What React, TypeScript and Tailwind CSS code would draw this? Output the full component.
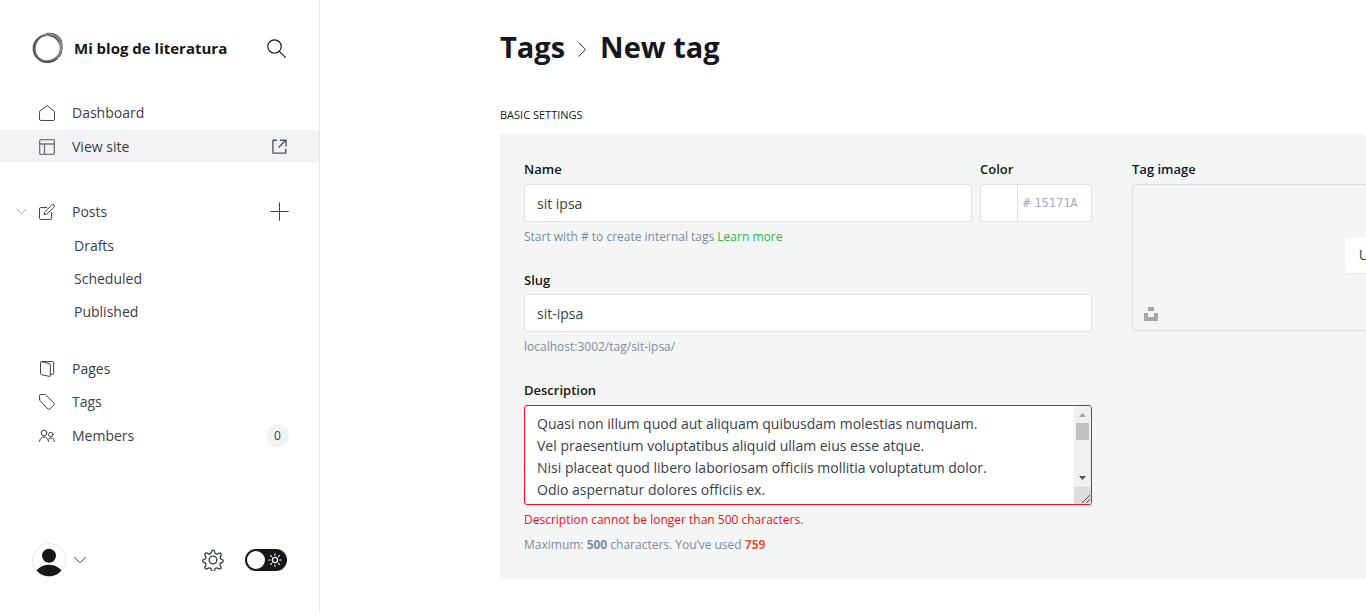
import type { ReactNode } from "react";

type IconProps = { className?: string; children: ReactNode };

function Icon({ className = "", children }: IconProps) {
  return (
    <svg
      viewBox="0 0 24 24"
      fill="none"
      stroke="currentColor"
      strokeWidth="1.5"
      strokeLinecap="round"
      strokeLinejoin="round"
      aria-hidden="true"
      className={"shrink-0 " + className}
    >
      {children}
    </svg>
  );
}

const HomeIcon = () => (
  <Icon className="size-4">
    <path d="M.8 9.5 12 .8l11.2 8.7v12a1.7 1.7 0 0 1-1.7 1.7h-19a1.7 1.7 0 0 1-1.7-1.7z" />
  </Icon>
);
const LayoutIcon = () => (
  <Icon className="size-4 text-[#6f767d]">
    <rect x="1" y="1" width="22" height="22" rx="1.5" strokeWidth="2" />
    <path strokeWidth="2" d="M1 7.500h22M8.200 7.500V23" />
  </Icon>
);
const ExternalIcon = () => (
  <Icon className="size-[15px] text-[#4d555c]">
    <path strokeWidth="2.200" strokeLinecap="butt" d="M8 2H1.500v20.500H22V15.500M12.500 2H22.500v10M22 2 10.500 13.500" />
  </Icon>
);
const PenIcon = () => (
  <Icon className="size-4">
    <path d="M19 12.500v9a1.700 1.700 0 0 1-1.700 1.700H2.500A1.700 1.700 0 0 1 .8 21.500V7A1.700 1.700 0 0 1 2.500 5.300h9" />
    <path d="m9 11.500 10.200-10a2.300 2.300 0 0 1 3.300 3.300l-10.200 10-4.300 1z" />
  </Icon>
);
const PagesIcon = () => (
  <Icon className="size-4">
    <path d="M6 .9h14.500a1.500 1.500 0 0 1 1.500 1.500V18.500a1.500 1.500 0 0 1-1.500 1.500H17M3.500.9 15.500 4a2 2 0 0 1 1.500 2v16a1.200 1.200 0 0 1-1.500 1.100L4 20.600A2 2 0 0 1 2.300 18.600V2.100A1.200 1.200 0 0 1 3.500.9h3" />
  </Icon>
);
const TagIcon = () => (
  <Icon className="size-4">
    <path d="M.8 8V2.300A1.500 1.500 0 0 1 2.300.8H8.500a3 3 0 0 1 2.100.9l12 12a1.700 1.700 0 0 1 0 2.400l-6.500 6.500a1.700 1.700 0 0 1-2.400 0L1.700 10.100A3 3 0 0 1 .8 8z" />
  </Icon>
);
const MembersIcon = () => (
  <Icon className="size-4">
    <circle cx="7.500" cy="7.500" r="4.200" />
    <path d="M.8 20.200a6.700 6.700 0 0 1 13.400 0" />
    <circle cx="17.800" cy="9.800" r="3.300" />
    <path d="M14.500 16.300a5.300 5.300 0 0 1 8.700 4" />
  </Icon>
);
const SearchIcon = () => (
  <Icon className="size-[19px]">
    <circle cx="9.500" cy="9.500" r="8.500" />
    <path d="m15.600 15.600 7.600 7.600" />
  </Icon>
);
const GearIcon = () => (
  <Icon className="size-[22px]">
    <circle cx="12" cy="12" r="4.200" />
    <path d="m13.700 2.600.5 1.600a2 2 0 0 0 2.700 1.200l1.700-.8a1.700 1.700 0 0 1 2.200 2.300l-.8 1.600a2 2 0 0 0 1.100 2.700l.9.300a1.700 1.700 0 0 1 0 3.200l-1 .300a2 2 0 0 0-1.100 2.700l.8 1.700a1.700 1.700 0 0 1-2.200 2.200l-1.700-.8a2 2 0 0 0-2.700 1.200l-.5 1.300a1.700 1.700 0 0 1-3.200 0l-.5-1.300a2 2 0 0 0-2.700-1.200l-1.700.8a1.700 1.700 0 0 1-2.200-2.200l.8-1.700A2 2 0 0 0 3 15l-1.100-.4a1.700 1.700 0 0 1 0-3.200L3 11.100a2 2 0 0 0 1.100-2.700l-.8-1.600a1.700 1.700 0 0 1 2.200-2.300l1.700.8A2 2 0 0 0 9.900 4.200l.5-1.600a1.700 1.700 0 0 1 3.300 0z" />
  </Icon>
);
const SunIcon = () => (
  <Icon className="size-[14px]">
    <circle cx="12" cy="12" r="4.500" strokeWidth="2" />
    <path strokeWidth="2" d="M12 1.500v2M12 20.500v2M1.500 12h2M20.500 12h2M4.600 4.600 6 6M18 18l1.400 1.400M4.600 19.400 6 18M18 6l1.400-1.400" />
  </Icon>
);
const BlogLogo = () => (
  <svg viewBox="0 0 32 32" fill="none" className="size-8 shrink-0" aria-hidden="true">
    <ellipse cx="15.300" cy="16.500" rx="13.600" ry="13.500" stroke="#555" strokeWidth="2" />
    <ellipse cx="15.800" cy="16.800" rx="14.300" ry="13.600" stroke="#444" strokeWidth="1" />
    <ellipse cx="16.600" cy="15.300" rx="14.300" ry="12.600" stroke="#777" strokeWidth="1.300" transform="rotate(-45 16.600 15.300)" />
    <path d="M13 3C20 .5 28 4.500 29 12c.8 6-.5 10-4.500 14" stroke="#8a8a8a" strokeWidth="2.500" />
    <path d="M14 1.800C21-.2 28.500 3.500 29.800 10.500" stroke="#666" strokeWidth="1" />
  </svg>
);

type NavItemProps = { label: string; icon?: ReactNode; active?: boolean };

function NavItem({ label, icon, active }: NavItemProps) {
  return (
    <a
      href="#"
      className={
        "flex h-[33px] flex-1 items-center text-sm text-[#394047] " +
        (icon ? "gap-[17px] pl-[39px] " : "pl-[74px] ") +
        (active ? "bg-[#f1f3f4]" : "")
      }
    >
      {icon}
      {label}
    </a>
  );
}

function Sidebar() {
  return (
    <aside className="flex min-h-screen w-80 shrink-0 flex-col border-r border-[#e6e9eb]">
      <header className="flex h-24 items-center pr-[33px] pl-8 text-[#15171a]">
        <BlogLogo />
        <span className="ml-[10px] flex-1 text-[15px] font-bold">Mi blog de literatura</span>
        <button aria-label="Search">
          <SearchIcon />
        </button>
      </header>
      <nav className="text-[#394047]">
        <NavItem label="Dashboard" icon={<HomeIcon />} />
        <div className="mt-px flex items-center bg-[#f1f3f4] pr-8">
          <NavItem label="View site" icon={<LayoutIcon />} active />
          <a href="#" aria-label="Open site in a new tab">
            <ExternalIcon />
          </a>
        </div>

        <div className="mt-8 flex items-center pr-[30px]">
          <button aria-label="Collapse posts" className="-mr-[27px] ml-4 text-[#8c98a5]">
            <Icon className="size-[11px]">
              <path strokeWidth="2" d="m2 7 10 10L22 7" />
            </Icon>
          </button>
          <NavItem label="Posts" icon={<PenIcon />} />
          <button aria-label="New post" className="text-[#394047]">
            <Icon className="size-[19px]">
              <path strokeWidth="1.300" d="M12 1v22M1 12h22" />
            </Icon>
          </button>
        </div>
        <div className="mt-px">
          <NavItem label="Drafts" />
          <NavItem label="Scheduled" />
          <NavItem label="Published" />
        </div>

        <div className="mt-6">
          <NavItem label="Pages" icon={<PagesIcon />} />
          <NavItem label="Tags" icon={<TagIcon />} />
          <div className="mt-px flex items-center pr-[30px]">
            <NavItem label="Members" icon={<MembersIcon />} />
            <span className="flex size-[23px] items-center justify-center rounded-full bg-[#f1f3f4] text-xs">0</span>
          </div>
        </div>
      </nav>
      <footer className="mt-auto flex items-center pr-8 pb-[35px] pl-8 text-[#394047]">
        <button aria-label="Account menu" className="flex items-center gap-2">
          <svg viewBox="0 0 34 34" className="size-[34px]" aria-hidden="true">
            <defs>
              <clipPath id="avatar">
                <circle cx="17" cy="17" r="16.300" />
              </clipPath>
            </defs>
            <circle cx="17" cy="17" r="16.500" fill="#fff" stroke="#e6e9eb" />
            <g clipPath="url(#avatar)" fill="#15171a">
              <circle cx="17" cy="12.800" r="7" />
              <ellipse cx="17" cy="32" rx="13.500" ry="10.300" />
            </g>
          </svg>
          <Icon className="size-3">
            <path strokeWidth="2" d="m1 6.500 11 11 11-11" />
          </Icon>
        </button>
        <button aria-label="Settings" className="ml-auto">
          <GearIcon />
        </button>
        <label className="ml-[21px] flex h-[22px] w-[42px] items-center justify-between rounded-full bg-[#15171a] pr-[5px] pl-[2px] text-white">
          <input type="checkbox" aria-label="Dark mode" className="size-[18px] appearance-none rounded-full bg-white" />
          <SunIcon />
        </label>
      </footer>
    </aside>
  );
}

const description = [
  "Quasi non illum quod aut aliquam quibusdam molestias numquam.",
  "Vel praesentium voluptatibus aliquid ullam eius esse atque.",
  "Nisi placeat quod libero laboriosam officiis mollitia voluptatum dolor.",
  "Odio aspernatur dolores officiis ex.",
].join("\n");

const labelClass = "block h-5 text-[13px] leading-5 font-semibold text-[#15171a]";
const fieldClass = "block h-[38px] w-full rounded-[3px] border border-[#dddfe0] bg-white px-3 text-sm text-[#394047]";
const hintClass = "mt-[5px] text-xs leading-5 text-[#7c8b9a]";

function DescriptionField() {
  return (
    <div className="flex h-[100px] overflow-hidden rounded-[3px] border border-[#f50b23] bg-white">
      <textarea
        id="description"
        defaultValue={description}
        className="h-full flex-1 resize-none overflow-hidden px-3 pt-[7px] text-sm leading-[22px] text-[#394047] outline-none"
      />
      <div className="flex w-[17px] flex-col bg-[#f1f1f1]" aria-hidden="true">
        <svg viewBox="0 0 17 17" className="size-[17px]">
          <path d="M5 11h7L8.500 7z" fill="#a3a3a3" />
        </svg>
        <div className="mx-[2px] h-[17px] bg-[#c1c1c1]" />
        <svg viewBox="0 0 17 17" className="mt-auto size-[17px]">
          <path d="M5 6h7l-3.500 4z" fill="#505050" />
        </svg>
        <svg viewBox="0 0 17 17" className="size-[17px] bg-[#dcdcdc]" stroke="#505050">
          <path d="m8 16 8-8M12 16l4-4" />
        </svg>
      </div>
    </div>
  );
}

function TagForm() {
  return (
    <form className="grid w-[1224px] grid-cols-2 gap-10 bg-[#f4f6f6] px-6 pt-[25px] pb-6">
      <div>
        <div className="flex gap-2">
          <div className="flex-1">
            <label htmlFor="name" className={labelClass}>Name</label>
            <input id="name" defaultValue="sit ipsa" className={fieldClass + " mt-[5px]"} />
          </div>
          <div className="w-28">
            <label htmlFor="color" className={labelClass}>Color</label>
            <div className="mt-[5px] flex h-[38px] overflow-hidden rounded-[3px] border border-[#dddfe0] bg-white">
              <button type="button" aria-label="Pick a color" className="w-[37px] border-r border-[#dddfe0]" />
              <div className="flex flex-1 items-center gap-1 pl-[5px] font-['DejaVu_Sans_Mono',monospace] text-xs text-[#a3adb8]">
                <span>#</span>
                <input id="color" placeholder="15171A" className="w-14 placeholder:text-[#a3adb8]" />
              </div>
            </div>
          </div>
        </div>
        <p className={hintClass}>
          Start with # to create internal tags <a href="#" className="text-[#2bb63c]">Learn more</a>
        </p>

        <label htmlFor="slug" className={labelClass + " mt-[23px]"}>Slug</label>
        <input id="slug" defaultValue="sit-ipsa" className={fieldClass + " mt-1"} />
        <p className={hintClass}>localhost:3002/tag/sit-ipsa/</p>

        <label htmlFor="description" className={labelClass + " mt-[23px] mb-[5px]"}>Description</label>
        <DescriptionField />
        <p className="mt-[5px] text-xs leading-5 text-[#f50b23]">Description cannot be longer than 500 characters.</p>
        <p className={hintClass}>
          Maximum: <b>500</b> characters. You’ve used <b className="text-[#e25440]">759</b>
        </p>
      </div>

      <div>
        <span className={labelClass}>Tag image</span>
        <div className="relative mt-[5px] flex h-[147px] items-center justify-center rounded-[3px] border border-[#dddfe0]">
          <button type="button" className="mt-[-5px] h-[35px] w-[142px] rounded-[3px] bg-white text-sm font-medium text-[#394047] shadow-xs">
            Upload tag image
          </button>
          <button type="button" aria-label="Choose from Unsplash" className="absolute bottom-[9px] left-[11px]">
            <svg viewBox="0 0 14 14" className="size-[14px]" fill="#a5a7a7">
              <path d="M4 0h6v4H4zM0 6h4v4h6V6h4v8H0z" />
            </svg>
          </button>
        </div>
      </div>
    </form>
  );
}

export default function App() {
  return (
    <div className="flex min-h-screen overflow-hidden bg-white font-['Open_Sans','Noto_Sans',sans-serif]">
      <Sidebar />
      <main className="min-w-0 flex-1 overflow-hidden pl-[180px]">
        <h1 className="flex h-[94px] items-center text-[29px] font-bold text-[#15171a]">
          <a href="#">Tags</a>
          <Icon className="mx-[10px] mt-1 size-[15px]">
            <path d="m6 1 11 11L6 23" />
          </Icon>
          New tag
        </h1>
        <h2 className="mt-[11px] mb-[9px] text-[11px] leading-5 font-medium text-[#15171a] uppercase">Basic settings</h2>
        <TagForm />
      </main>
    </div>
  );
}
